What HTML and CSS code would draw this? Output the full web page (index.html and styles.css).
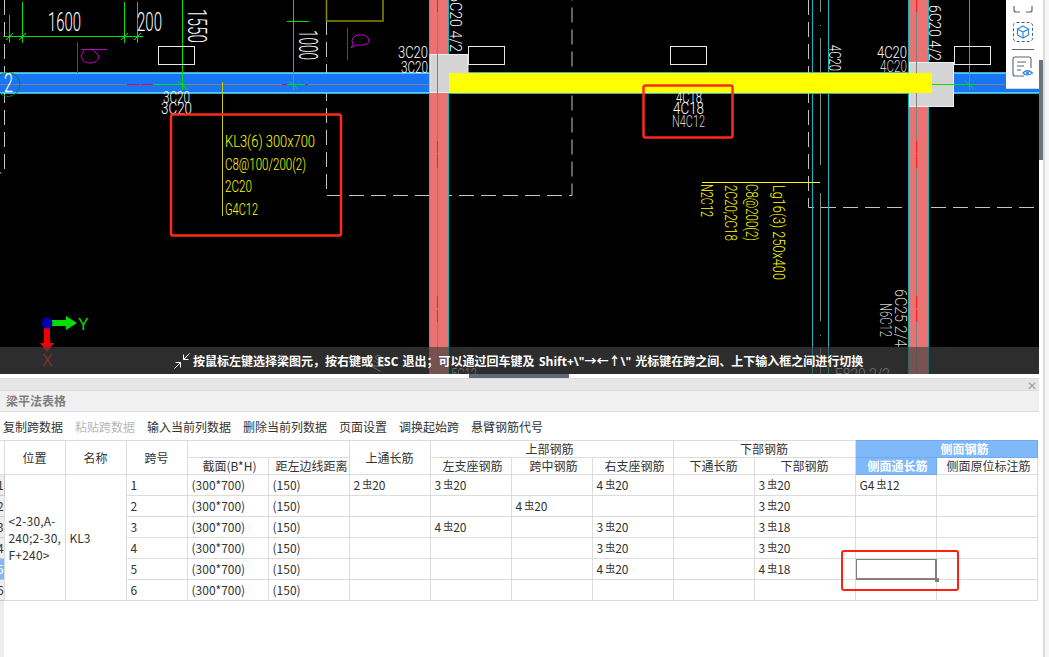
FILE: index.html
```html
<!DOCTYPE html>
<html lang="zh-CN">
<head>
<meta charset="utf-8">
<title>梁平法表格</title>
<link rel="stylesheet" href="styles.css">
</head>
<body>
<div class="app">
  <main class="main">
    <section class="canvas">
      <svg class="cad" width="1039" height="374" viewBox="0 0 1039 374" xmlns="http://www.w3.org/2000/svg">
        <!-- dashed walls -->
        <g class="dash">
          <path d="M4.500 0V173H0"/>
          <path d="M326.500 20V195.500H572V0"/>
          <path d="M808.500 0V207.500H1039"/>
        </g>
        <path class="olive" d="M326.500 0V21H383V0"/>
        <!-- beam -->
        <rect class="beam" x="0" y="73" width="1039" height="20"/>
        <path class="beam-edge" d="M0 73H1039M0 93H1039"/>
        <path class="center" d="M0 84.500H1039"/>
        <!-- dimensions -->
        <g class="green">
          <path d="M3 36.500H143M9.500 15V43M22.500 2V43M124.500 2V43M137.500 2V43"/>
          <path d="M6 40L13 33M19 40L26 33M121 40L128 33M134 40L141 33"/>
          <path d="M182.500 0V90M293.500 0V90M287 21.500H309"/>
          <path d="M153 84.500H186M287 84.500H305M969.500 0V90M931 84.500H975"/>
          <path d="M178 81L187 89M289 81L298 89M965 81L974 89"/>
        </g>
        <path class="red-line" d="M127 84.500H140M141 84.500H153M282 84.500H287M305 84.500H308"/>
        <circle class="axis-ring" cx="8" cy="84.500" r="12"/>
        <text class="cad-t white" x="4" y="92" textLength="9" lengthAdjust="spacingAndGlyphs">2</text>
        <!-- magenta marks -->
        <g class="magenta">
          <path d="M77.500 42V73M81 49.500H107M84 50L81 56Q83 63 90 63Q98 63 99 56L93 50"/>
          <path d="M347.500 28V60M358 35H364Q369 37 369 41Q369 45 362 45H356L351 48L353 44Q351 40 353 38Q355 35 358 35"/>
        </g>
        <!-- plain white boxes -->
        <g class="box">
          <rect x="158.500" y="46.500" width="36" height="18"/>
          <rect x="468.500" y="46.500" width="36" height="18"/>
          <rect x="670.500" y="46.500" width="36" height="18"/>
          <rect x="954.500" y="46.500" width="36" height="18"/>
        </g>
        <!-- verticals -->
        <path class="cyan" d="M812.500 0V374M828.500 0V374"/>
        <path class="grey-v" d="M820.500 0V12M820.500 25V26M820.500 38V165M820.500 193V321M820.500 335V336M820.500 348V374"/>
        <!-- columns -->
        <rect class="col" x="430" y="0" width="19" height="374"/>
        <rect class="col" x="909" y="0" width="19" height="374"/>
        <path class="cyan" d="M429.500 0V374M448.500 0V374M908.500 0V374M928.500 0V374"/>
        <!-- grips -->
        <rect class="grip" x="430" y="54.500" width="38" height="38"/>
        <rect class="grip" x="909.500" y="62.500" width="44" height="44"/>
        <path class="center" d="M437.500 0V374M916.500 0V374"/>
        <path class="red-v" d="M437.500 0V12M437.500 141V153M437.500 154V168M437.500 296V308M437.500 310V322M916.500 0V12M916.500 141V153M916.500 154V168M916.500 296V308M916.500 310V322"/>
        <rect class="hl" x="449" y="73" width="483" height="20"/>
        <path class="green" d="M932 84.500H975"/>
        <!-- white CAD text -->
        <text class="cad-t white" x="48" y="31" textLength="33" lengthAdjust="spacingAndGlyphs">1600</text>
        <text class="cad-t white" x="137" y="31" textLength="25" lengthAdjust="spacingAndGlyphs">200</text>
        <text class="cad-t white" transform="translate(188 9) rotate(90)" textLength="34" lengthAdjust="spacingAndGlyphs">1550</text>
        <text class="cad-t white" transform="translate(299 30) rotate(90)" textLength="30" lengthAdjust="spacingAndGlyphs">1000</text>
        <text class="cad-s white" x="163" y="103" textLength="27" lengthAdjust="spacingAndGlyphs">3C20</text>
        <text class="cad-s white" x="161" y="114" textLength="31" lengthAdjust="spacingAndGlyphs">3C20</text>
        <text class="cad-s white" x="398" y="58" textLength="30" lengthAdjust="spacingAndGlyphs">3C20</text>
        <text class="cad-s white" x="401" y="73" textLength="27" lengthAdjust="spacingAndGlyphs">3C20</text>
        <text class="cad-s white" transform="translate(450 -6) rotate(90)" textLength="58" lengthAdjust="spacingAndGlyphs">6C20 4/2</text>
        <text class="cad-s white" x="676" y="103" textLength="26" lengthAdjust="spacingAndGlyphs">4C18</text>
        <text class="cad-s white" x="673" y="114" textLength="31" lengthAdjust="spacingAndGlyphs">4C18</text>
        <text class="cad-s dim" x="672" y="127" textLength="33" lengthAdjust="spacingAndGlyphs">N4C12</text>
        <text class="cad-s white" transform="translate(829 45) rotate(90)" textLength="26" lengthAdjust="spacingAndGlyphs">4C20</text>
        <text class="cad-s white" x="877" y="58" textLength="30" lengthAdjust="spacingAndGlyphs">4C20</text>
        <text class="cad-s dim" x="880" y="72" textLength="27" lengthAdjust="spacingAndGlyphs">4C20</text>
        <text class="cad-s white" transform="translate(929 5) rotate(90)" textLength="56" lengthAdjust="spacingAndGlyphs">6C20 4/2</text>
        <text class="cad-s dim" transform="translate(895 289) rotate(90)" textLength="58" lengthAdjust="spacingAndGlyphs">6C25 2/4</text>
        <text class="cad-s dim" transform="translate(880 303) rotate(90)" textLength="34" lengthAdjust="spacingAndGlyphs">N6C12</text>
        <text class="cad-s dim" x="835" y="380" textLength="55" lengthAdjust="spacingAndGlyphs">F820 2/2</text>
        <text class="cad-s dim" x="451" y="380" textLength="26" lengthAdjust="spacingAndGlyphs">5C12</text>
        <text class="cad-s dim" transform="translate(380 373) rotate(-60)" textLength="16" lengthAdjust="spacingAndGlyphs">N8</text>
        <!-- yellow annotations -->
        <path class="leader" d="M222.500 82V216"/>
        <text class="cad-s yellow" x="225" y="147" textLength="90" lengthAdjust="spacingAndGlyphs">KL3(6) 300x700</text>
        <text class="cad-s yellow" x="225" y="170" textLength="81" lengthAdjust="spacingAndGlyphs">C8@100/200(2)</text>
        <text class="cad-s yellow" x="225" y="192" textLength="27" lengthAdjust="spacingAndGlyphs">2C20</text>
        <text class="cad-s yellow" x="225" y="215" textLength="33" lengthAdjust="spacingAndGlyphs">G4C12</text>
        <path class="yellow-line" d="M702 182.500H820"/>
        <text class="cad-s yellow" transform="translate(701 184) rotate(90)" textLength="33" lengthAdjust="spacingAndGlyphs">N2C12</text>
        <text class="cad-s yellow" transform="translate(725 185) rotate(90)" textLength="56" lengthAdjust="spacingAndGlyphs">2C20;2C18</text>
        <text class="cad-s yellow" transform="translate(746 184) rotate(90)" textLength="57" lengthAdjust="spacingAndGlyphs">C8@200(2)</text>
        <text class="cad-s yellow" transform="translate(773 185) rotate(90)" textLength="95" lengthAdjust="spacingAndGlyphs">Lg16(3) 250x400</text>
        <!-- axes -->
        <path class="axis-y" d="M50 320H66V316L77 323L66 330V326H50Z"/>
        <path class="axis-x" d="M44 326H50V343H54L47 352L40 343H44Z"/>
        <circle class="axis-o" cx="47" cy="323" r="5.500"/>
        <text class="axis-label green-t" x="78" y="330">Y</text>
        <text class="axis-label red-t" x="42" y="366">X</text>
        <!-- callouts -->
        <rect class="callout" x="171" y="114.500" width="170" height="121" rx="2"/>
        <rect class="callout" x="643.500" y="85.500" width="89" height="52" rx="2"/>
      </svg>

      <div class="tools">
        <svg class="tool tool-frame" width="20" height="13" viewBox="0 0 20 13" xmlns="http://www.w3.org/2000/svg">
          <path d="M1 6V10Q1 12 3 12H7M13 12H17Q19 12 19 10V6"/>
        </svg>
        <svg class="tool" width="20" height="20" viewBox="0 0 20 20" xmlns="http://www.w3.org/2000/svg">
          <rect class="tool-dash" x="0.500" y="0.500" width="19" height="19" rx="3"/>
          <path class="tool-blue" d="M10 4L15.500 7V13L10 16L4.500 13V7ZM4.500 7L10 10L15.500 7M10 10V16"/>
        </svg>
        <div class="tool-sep"></div>
        <svg class="tool" width="21" height="21" viewBox="0 0 21 21" xmlns="http://www.w3.org/2000/svg">
          <path class="tool-line" d="M12 20H3Q1 20 1 18V3Q1 1 3 1H17Q19 1 19 3V12"/>
          <path class="tool-line" d="M5 6H14M5 10H12M5 14H9"/>
          <path class="tool-blue" d="M11 17Q15 12.500 20.500 17Q15 21 11 17Z"/>
          <circle class="tool-eye" cx="15.500" cy="17" r="1.500"/>
        </svg>
      </div>

      <div class="hint">
        <svg class="hint-icon" width="16" height="16" viewBox="0 0 16 16" xmlns="http://www.w3.org/2000/svg">
          <path d="M0.500 15.500L6.500 9.500M1.500 9.500H6.500V14.500M15.500 0.500L9.500 6.500M9.500 1.500V6.500H14.500"/>
        </svg>
        <span class="hint-text">按鼠标左键选择梁图元，按右键或 ESC 退出；可以通过回车键及 Shift+\"→←↑\" 光标键在跨之间、上下输入框之间进行切换</span>
      </div>
    </section>

    <div class="hscroll"><div class="hscroll-thumb"></div></div>

    <section class="panel">
      <div class="closebar"><span class="close">✕</span></div>
      <div class="titlebar">梁平法表格</div>
      <div class="toolbar">
        <span>复制跨数据</span>
        <span class="disabled">粘贴跨数据</span>
        <span>输入当前列数据</span>
        <span>删除当前列数据</span>
        <span>页面设置</span>
        <span>调换起始跨</span>
        <span>悬臂钢筋代号</span>
      </div>
      <div class="table-wrap">
        <table class="grid">
          <colgroup>
            <col class="c-idx"><col class="c-60"><col class="c-60"><col class="c-60">
            <col class="c-80"><col class="c-80"><col class="c-80"><col class="c-80"><col class="c-80"><col class="c-80"><col class="c-80">
            <col class="c-100"><col class="c-80"><col class="c-100">
          </colgroup>
          <thead>
            <tr class="head">
              <th rowspan="2" class="idx"></th>
              <th rowspan="2">位置</th>
              <th rowspan="2">名称</th>
              <th rowspan="2">跨号</th>
              <th colspan="2"></th>
              <th rowspan="2">上通长筋</th>
              <th colspan="3" class="nudge-left">上部钢筋</th>
              <th colspan="2">下部钢筋</th>
              <th colspan="2" class="active group">侧面钢筋</th>
            </tr>
            <tr class="head">
              <th class="nudge">截面(B*H)</th>
              <th class="nudge">距左边线距离</th>
              <th class="nudge">左支座钢筋</th>
              <th class="nudge">跨中钢筋</th>
              <th class="nudge">右支座钢筋</th>
              <th>下通长筋</th>
              <th>下部钢筋</th>
              <th class="active nudge">侧面通长筋</th>
              <th class="nudge">侧面原位标注筋</th>
            </tr>
          </thead>
          <tbody>
            <tr>
              <td class="idx">1</td>
              <td rowspan="6" class="loc">&lt;2-30,A-<br>240;2-30,<br>F+240&gt;</td>
              <td rowspan="6">KL3</td>
              <td>1</td><td>(300*700)</td><td>(150)</td>
              <td>2<span class="bar">虫</span>20</td>
              <td>3<span class="bar">虫</span>20</td>
              <td></td>
              <td>4<span class="bar">虫</span>20</td>
              <td></td>
              <td>3<span class="bar">虫</span>20</td>
              <td>G4<span class="bar">虫</span>12</td>
              <td></td>
            </tr>
            <tr>
              <td class="idx">2</td>
              <td>2</td><td>(300*700)</td><td>(150)</td>
              <td></td><td></td>
              <td>4<span class="bar">虫</span>20</td>
              <td></td><td></td>
              <td>3<span class="bar">虫</span>20</td>
              <td></td><td></td>
            </tr>
            <tr>
              <td class="idx">3</td>
              <td>3</td><td>(300*700)</td><td>(150)</td>
              <td></td>
              <td>4<span class="bar">虫</span>20</td>
              <td></td>
              <td>3<span class="bar">虫</span>20</td>
              <td></td>
              <td>3<span class="bar">虫</span>18</td>
              <td></td><td></td>
            </tr>
            <tr>
              <td class="idx">4</td>
              <td>4</td><td>(300*700)</td><td>(150)</td>
              <td></td><td></td><td></td>
              <td>3<span class="bar">虫</span>20</td>
              <td></td>
              <td>3<span class="bar">虫</span>20</td>
              <td></td><td></td>
            </tr>
            <tr>
              <td class="idx idx-on">5</td>
              <td>5</td><td>(300*700)</td><td>(150)</td>
              <td></td><td></td><td></td>
              <td>4<span class="bar">虫</span>20</td>
              <td></td>
              <td>4<span class="bar">虫</span>18</td>
              <td class="selected"><i class="handle"></i></td>
              <td></td>
            </tr>
            <tr>
              <td class="idx">6</td>
              <td>6</td><td>(300*700)</td><td>(150)</td>
              <td></td><td></td><td></td><td></td><td></td><td></td><td></td><td></td>
            </tr>
          </tbody>
        </table>
        <div class="cell-callout"></div>
      </div>
    </section>
  </main>
  <aside class="gutter">
    <div class="vscroll"><div class="vscroll-thumb"></div></div>
    <div class="ruler"></div>
  </aside>
</div>
</body>
</html>
```
FILE: styles.css
```css
* { box-sizing: border-box; }
html, body { margin: 0; height: 100%; overflow: hidden; background: #fff; }
body { font-family: "Noto Sans CJK SC", "Liberation Sans", sans-serif; font-size: 12px; color: #333; }

.app { display: flex; height: 657px; width: 1049px; }
.main { width: 1039px; display: flex; flex-direction: column; }
.gutter { width: 10px; display: flex; background: #fff; }
.vscroll { width: 4px; padding-top: 60px; }
.vscroll-thumb { height: 100px; background: #6b7580; }
.ruler { width: 6px; border-left: 2px solid #dcdcdc; background: #f6f6f6; }

/* Drawing canvas */
.canvas { position: relative; height: 374px; background: #000; overflow: hidden; flex: none; }
.cad { display: block; }
.cad path, .cad rect, .cad circle { fill: none; }
.cad .dash path { stroke: #c4c4c4; stroke-width: 1; stroke-dasharray: 15 7; fill: none; }
.cad .olive { stroke: #8a8a00; stroke-width: 1.5; }
.cad .beam { fill: #1a75f5; }
.cad .beam-edge { stroke: #5fe6ff; stroke-width: 1.500; }
.cad .center { stroke: #808080; stroke-width: 1; }
.cad .green, .cad .green path { stroke: #00e000; stroke-width: 1; }
.cad .red-line { stroke: #e01030; stroke-width: 1; }
.cad .red-v { stroke: #ff1a1a; stroke-width: 1; }
.cad .axis-ring { stroke: #0b7a2a; stroke-width: 1; }
.cad .magenta path { stroke: #c000c0; stroke-width: 1; }
.cad .box rect { stroke: #e8e8e8; stroke-width: 1; }
.cad .cyan { stroke: #13b5bd; stroke-width: 1; }
.cad .grey-v { stroke: #8c8c8c; stroke-width: 1; }
.cad .col { fill: #ea7272; }
.cad .grip { fill: #d4d4d4; stroke: #f0f0f0; stroke-width: 1; }
.cad .hl { fill: #ffff00; }
.cad .leader { stroke: #c8c800; stroke-width: 1; }
.cad .yellow-line { stroke: #ffff00; stroke-width: 1; }
.cad .callout { stroke: #ff2a1a; stroke-width: 2.500; }
.cad .axis-y { fill: #00e000; }
.cad .axis-x { fill: #f00000; }
.cad .axis-o { fill: #0000b0; }

.cad-t, .cad-s { font-family: Roboto, "Liberation Sans", sans-serif; font-weight: 300; }
.cad-t { font-size: 26px; }
.cad-s { font-size: 17px; }
.white { fill: #ffffff; }
.dim { fill: #cfcfcf; }
.yellow { fill: #ffff00; }
.axis-label { font-family: "Liberation Sans", sans-serif; font-size: 16px; }
.green-t { fill: #00e000; }
.red-t { fill: #ff0000; }

/* Floating tool strip */
.tools {
  position: absolute; right: 0; top: 0; width: 33px; height: 89px;
  background: #fff; display: flex; flex-direction: column; align-items: center;
  border-bottom: 1px solid #d8d8d8;
}
.tool { display: block; flex: none; }
.tool-frame { margin-bottom: 9px; margin-top: 0; }
.tool-frame path { fill: none; stroke: #5a6472; stroke-width: 1.200; }
.tool-dash { fill: none; stroke: #4f5b6b; stroke-width: 1; stroke-dasharray: 3 2; }
.tool-blue { fill: #fff; stroke: #2f86ef; stroke-width: 1.200; }
.tool-line { fill: none; stroke: #5a6472; stroke-width: 1.100; }
.tool-eye { fill: #2f86ef; }
.tool-sep { width: 22px; height: 1px; background: #666; margin: 7px 0 6px; flex: none; }

/* Hint overlay */
.hint {
  position: absolute; left: 0; right: 0; bottom: 0; height: 27px;
  background: rgba(66, 66, 66, 0.68); color: #fff;
  display: flex; align-items: center; padding-left: 174px; gap: 3px;
}
.hint-icon { flex: none; }
.hint-icon path { fill: none; stroke: #fff; stroke-width: 1; }
.hint-text { font-family: "Open Sans", "Noto Sans CJK SC", sans-serif; font-weight: 700; font-size: 12px; white-space: pre; word-spacing: 1.2px; }

/* Horizontal scroll strip */
.hscroll { height: 4px; background: #fff; padding-left: 469px; flex: none; }
.hscroll-thumb { width: 100px; height: 4px; background: #5f6b78; }

/* Bottom panel */
.panel { flex: 1; display: flex; flex-direction: column; background: #fff; }
.closebar {
  height: 12px; background: #e6e6e6; border-top: 1px solid #dcdcdc;
  display: flex; justify-content: flex-end; align-items: center; padding-right: 2px; flex: none;
}
.close { font-size: 12px; line-height: 11px; color: #a0a0a0; }
.titlebar {
  height: 22px; background: #f0f0f0; border-top: 1px solid #dcdcdc; border-bottom: 1px solid #dcdcdc;
  padding-left: 6px; line-height: 20px; font-weight: 700; color: #808080; flex: none;
}
.toolbar { height: 28px; display: flex; align-items: center; gap: 12px; padding-left: 3px; flex: none; color: #333; }
.toolbar .disabled { color: #b8b8b8; }

/* Data table */
.table-wrap { position: relative; flex: 1; background: linear-gradient(#eee, #eee) left top / 4px 100% no-repeat; }
.grid { border-collapse: collapse; table-layout: fixed; width: 1037px; background: #fff; }
.c-idx { width: 4px; }
.c-60 { width: 61px; }
.c-80 { width: 81px; }
.c-100 { width: 101px; }
.grid th, .grid td { border: 1px solid #dcdcdc; padding: 0 3px; font-weight: 400; overflow: hidden; white-space: nowrap; line-height: 16px; }
.grid th { text-align: center; height: 17px; color: #333; }
.grid td { height: 21px; text-align: left; padding-left: 4px; }
.grid th.nudge { padding-left: 7px; }
.grid th.nudge-left { padding-right: 7px; }
.grid th.group { padding-left: 40px; }
.grid th.active { background: #7fb9fa; color: #fff; font-weight: 700; border-color: #6fabf0; }
.grid .idx { border-left: 0; padding: 0; background: #eee; text-indent: -3px; border-color: #c8c8c8; }
.grid th.idx { background: #fff; border-color: #dcdcdc; }
.grid .idx-on { background: #7fb9fa; color: #fff; }
.grid .loc { line-height: 17px; white-space: nowrap; padding-left: 4px; letter-spacing: 0.2px; }
.bar { font-size: 10px; position: relative; top: -2px; margin: 0 0 0 2px; }
.grid td.selected { position: relative; box-shadow: inset 0 0 0 1px #808080; border: 1px solid #808080; overflow: visible; }
.handle { position: absolute; right: -3px; bottom: -3px; width: 4px; height: 4px; background: #808080; }

.cell-callout {
  position: absolute; left: 841px; top: 110px; width: 118px; height: 41px;
  border: 2.500px solid #ff2010; border-radius: 3px;
}
```
